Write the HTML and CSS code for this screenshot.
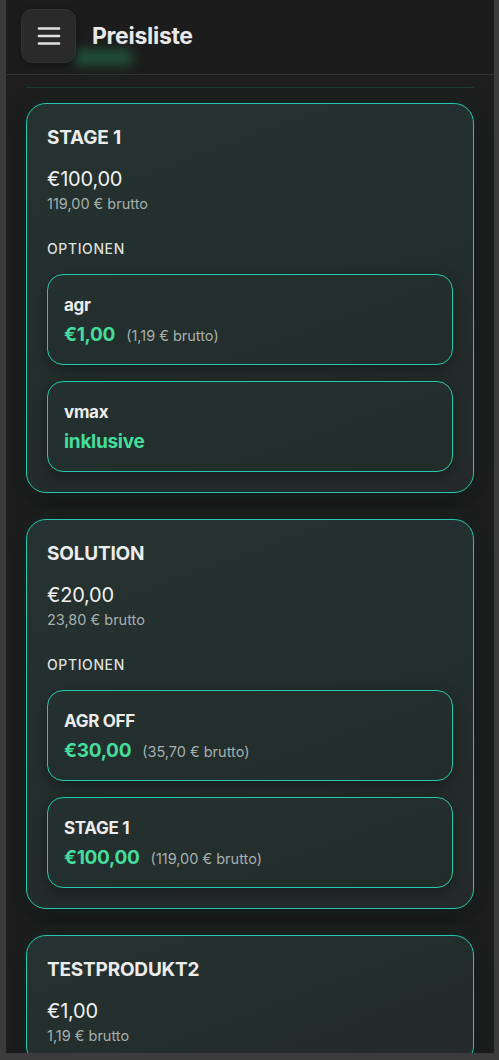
FILE: index.html
```html
<!DOCTYPE html>
<html lang="de">
<head>
<meta charset="utf-8">
<title>Preisliste</title>
<link rel="stylesheet" href="styles.css">
</head>
<body>
<div class="app">
  <header class="topbar">
    <span class="blur-ghost"></span>
    <button class="menu-btn" aria-label="Menü">
      <svg width="24" height="20" viewBox="0 0 24 20">
        <path d="M2 2.5H22M2 10H22M2 17.5H22" stroke="#e2e2e2" stroke-width="2.7" stroke-linecap="round" fill="none"/>
      </svg>
    </button>
    <h1 class="title">Preisliste</h1>
  </header>
  <main class="content">
    <div class="divider"></div>

    <section class="card">
      <h2 class="card-title">STAGE 1</h2>
      <div class="price">€100,00</div>
      <div class="gross">119,00 € brutto</div>
      <div class="opt-label">OPTIONEN</div>
      <div class="options">
        <div class="option">
          <div class="opt-name">agr</div>
          <div class="opt-price"><span class="opt-net">€1,00</span><span class="opt-gross">(1,19 € brutto)</span></div>
        </div>
        <div class="option">
          <div class="opt-name">vmax</div>
          <div class="opt-price"><span class="opt-net">inklusive</span></div>
        </div>
      </div>
    </section>

    <section class="card">
      <h2 class="card-title">SOLUTION</h2>
      <div class="price">€20,00</div>
      <div class="gross">23,80 € brutto</div>
      <div class="opt-label">OPTIONEN</div>
      <div class="options">
        <div class="option">
          <div class="opt-name">AGR OFF</div>
          <div class="opt-price"><span class="opt-net">€30,00</span><span class="opt-gross">(35,70 € brutto)</span></div>
        </div>
        <div class="option">
          <div class="opt-name">STAGE 1</div>
          <div class="opt-price"><span class="opt-net">€100,00</span><span class="opt-gross">(119,00 € brutto)</span></div>
        </div>
      </div>
    </section>

    <section class="card">
      <h2 class="card-title">TESTPRODUKT2</h2>
      <div class="price">€1,00</div>
      <div class="gross">1,19 € brutto</div>
    </section>
  </main>
</div>
</body>
</html>
```

FILE: styles.css
```css
* { box-sizing: border-box; }

html, body {
  margin: 0;
  padding: 0;
  background: #3b3b3b;
  font-family: Inter, "Noto Sans", sans-serif;
}

.app {
  margin: 0 5px 0 6px;
  height: 1053px;
  background: #1e1e1e;
  overflow: hidden;
  position: relative;
}

.topbar {
  position: relative;
  height: 75px;
  display: flex;
  align-items: flex-start;
  gap: 16px;
  padding: 9px 0 0 15px;
  background: #1c1c1c;
  border-bottom: 1px solid #313131;
}

.blur-ghost {
  position: absolute;
  left: 68px;
  top: 50px;
  width: 58px;
  height: 15px;
  background: rgba(40, 150, 100, 0.45);
  filter: blur(6px);
  z-index: 0;
}

.menu-btn {
  position: relative;
  z-index: 1;
  width: 55px;
  height: 54px;
  border-radius: 11px;
  border: 1px solid #333;
  background: #2a2a2a;
  display: flex;
  align-items: center;
  justify-content: center;
  padding: 0;
  box-shadow: 0 2px 6px rgba(0,0,0,0.35);
}

.title {
  margin: 0;
  font-size: 23px;
  line-height: 54px;
  font-weight: 700;
  color: #e8e8e8;
  letter-spacing: -0.3px;
}

.content {
  padding: 0 20px;
}

.divider {
  height: 1px;
  margin-top: 12px;
  background: #1f3a33;
}

.card {
  margin-top: 15px;
  margin-bottom: 26px;
  border: 1px solid #22c9aa;
  border-radius: 20px;
  padding: 22px 20px 20px;
  background: linear-gradient(160deg, #253331 0%, #232d2c 60%, #242a29 100%);
  box-shadow: 0 0 18px rgba(34, 201, 170, 0.10), 0 6px 22px rgba(0, 0, 0, 0.45);
}

.card + .card { margin-top: 0; }

.card-title {
  margin: 0;
  font-size: 19px;
  line-height: 24px;
  font-weight: 700;
  color: #ececec;
  letter-spacing: -0.2px;
}

.price {
  margin-top: 16px;
  font-size: 20px;
  line-height: 26px;
  font-weight: 400;
  color: #f0f0f0;
  letter-spacing: -0.2px;
}

.gross {
  margin-top: 3px;
  font-size: 14.5px;
  line-height: 18px;
  color: #a5b0ad;
}

.opt-label {
  margin-top: 27px;
  font-size: 14px;
  line-height: 18px;
  font-weight: 500;
  color: #dcdfde;
  letter-spacing: 0.6px;
}

.options {
  margin-top: 16px;
  display: flex;
  flex-direction: column;
  gap: 16px;
}

.option {
  border: 1px solid #22c9aa;
  border-radius: 16px;
  padding: 20px 16px 17px;
  background: linear-gradient(160deg, #24312f 0%, #222c2b 100%);
  box-shadow: 0 4px 14px rgba(0, 0, 0, 0.35);
}

.opt-name {
  font-size: 17px;
  line-height: 20px;
  height: 20px;
  font-weight: 700;
  color: #ececec;
  letter-spacing: -0.3px;
}

.opt-price {
  margin-top: 8px;
  display: flex;
  align-items: baseline;
  gap: 11px;
  height: 24px;
  line-height: 24px;
}

.opt-net {
  font-size: 19px;
  font-weight: 700;
  color: #45dc9c;
  letter-spacing: -0.3px;
}

.opt-gross {
  font-size: 14.5px;
  color: #a5b0ad;
}
```
